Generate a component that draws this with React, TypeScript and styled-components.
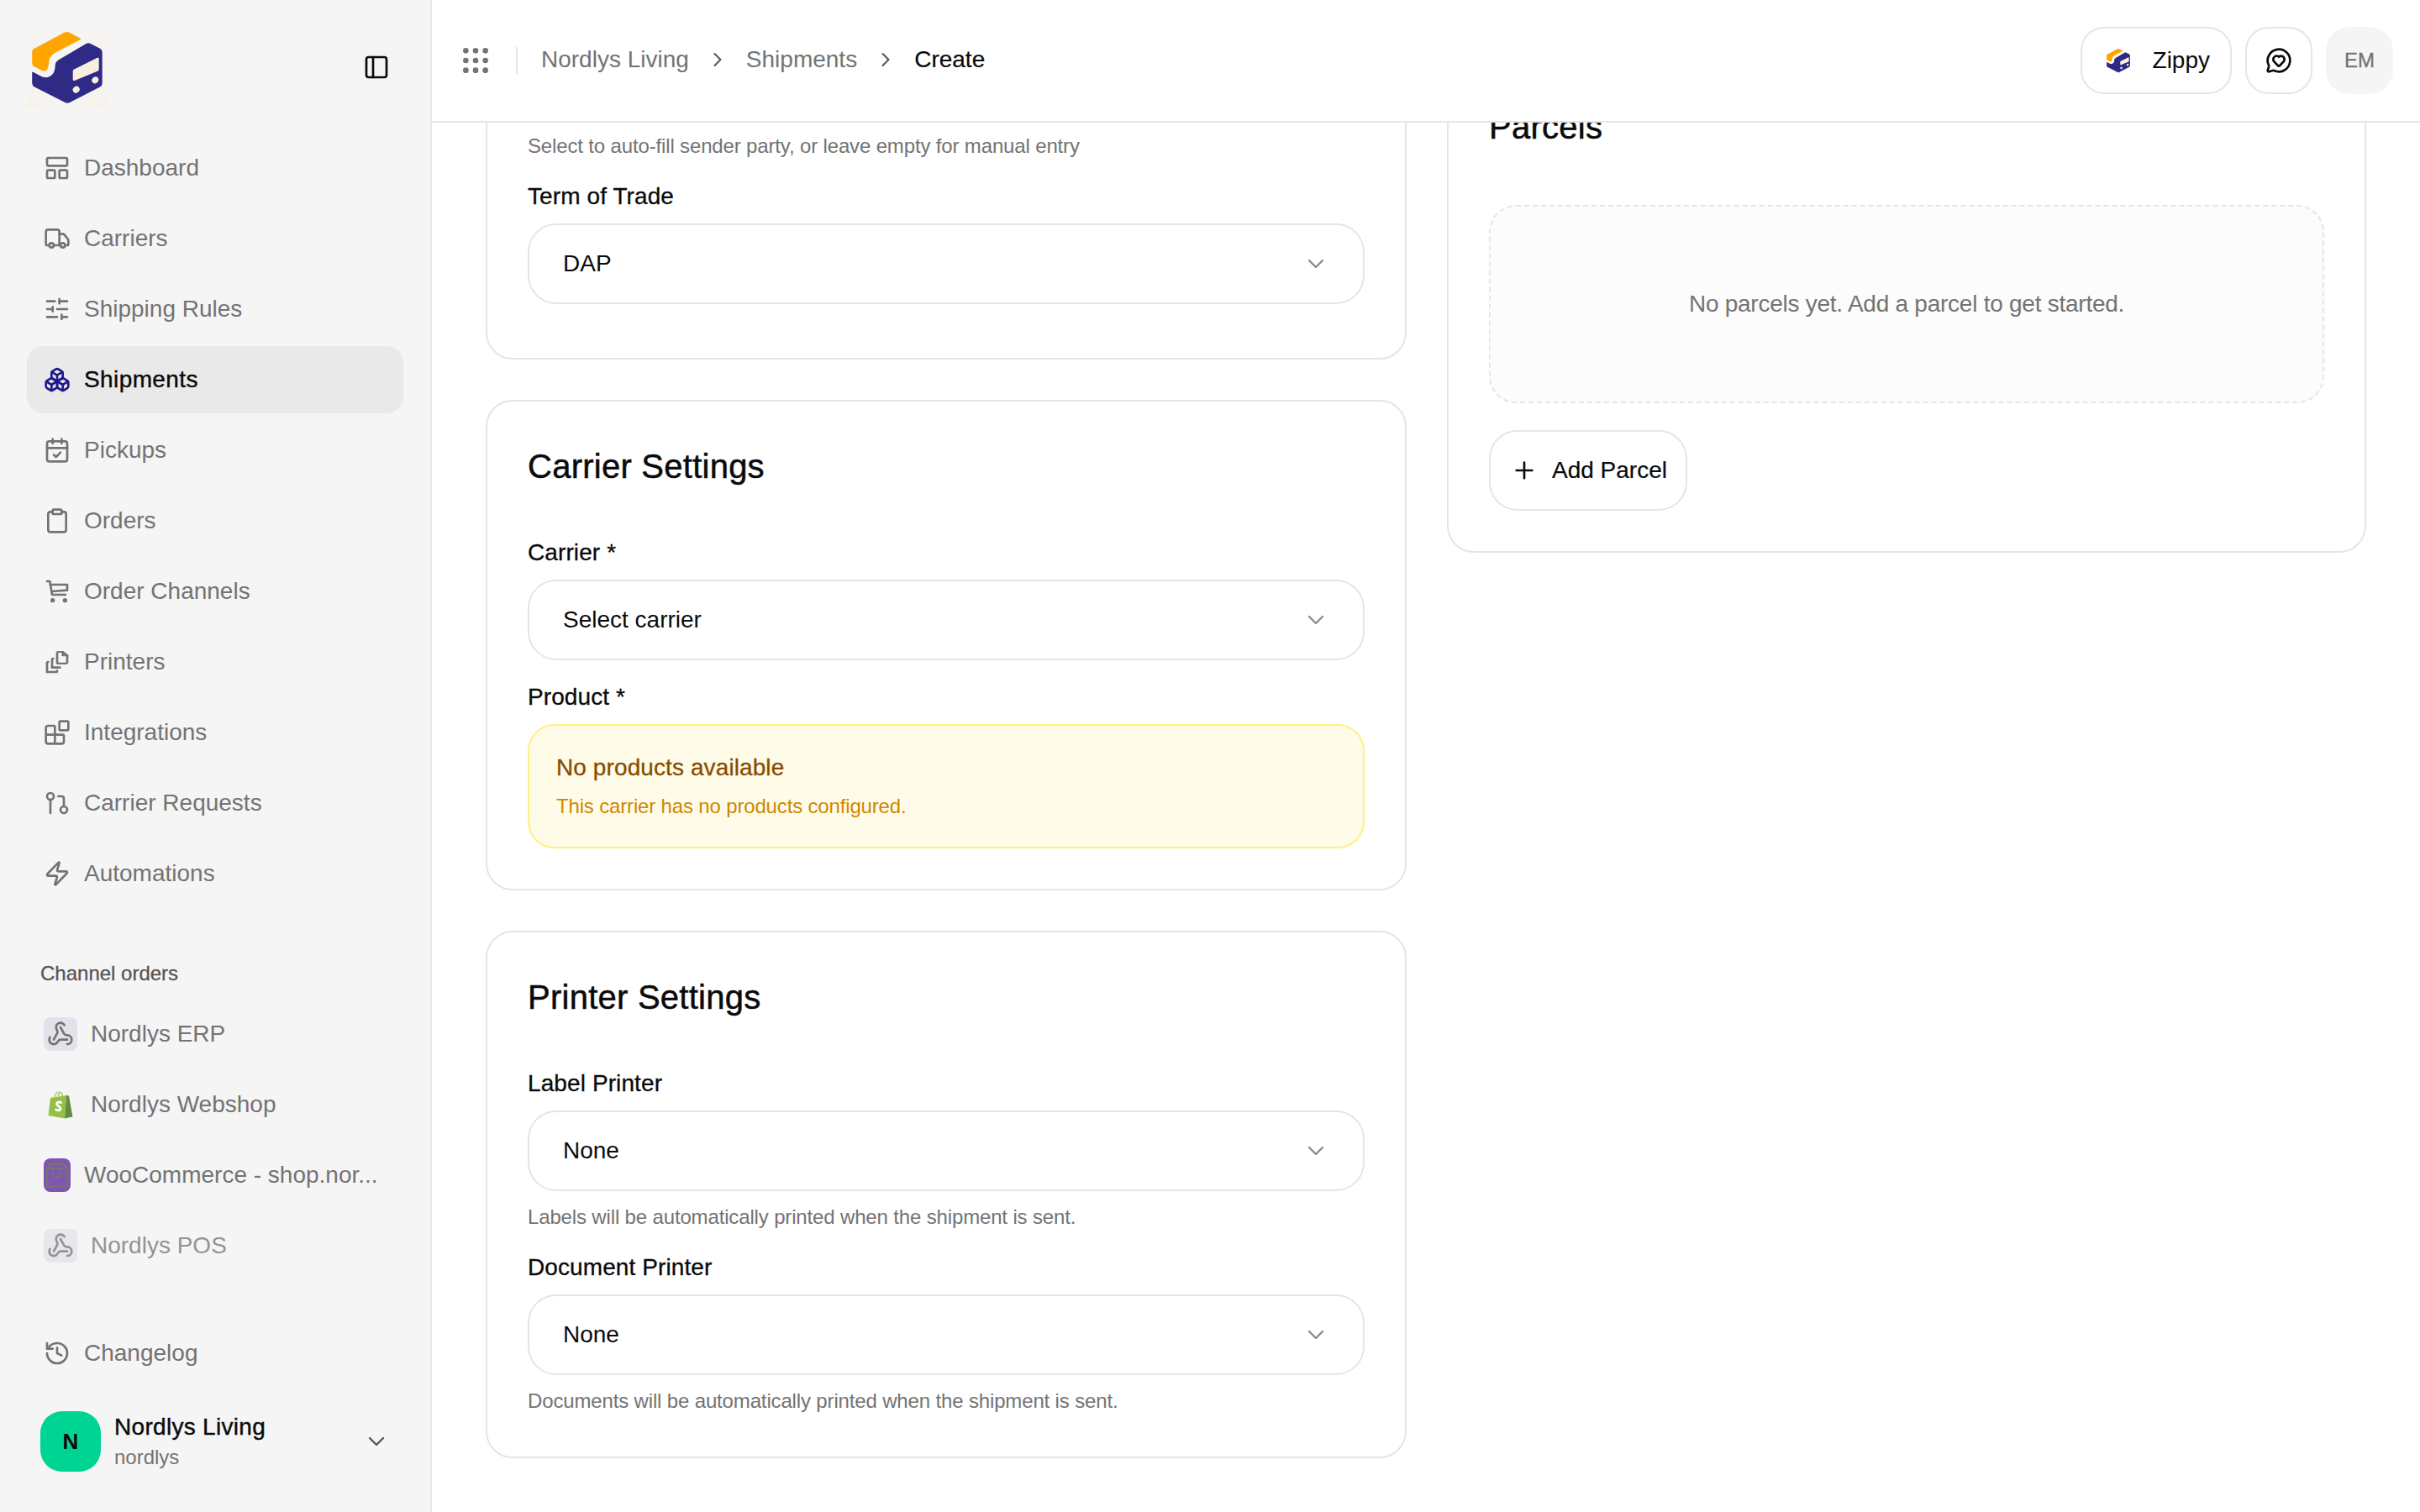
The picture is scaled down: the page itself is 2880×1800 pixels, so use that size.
import React from 'react';
import styled, { createGlobalStyle } from 'styled-components';
import {
  Truck,
  SlidersHorizontal,
  Boxes,
  CalendarCheck,
  Clipboard,
  Blocks,
  GitPullRequest,
  Zap,
  History,
  Webhook,
  ShoppingBag,
  PanelLeft,
  Grip,
  ChevronDown,
  ChevronRight,
  MessageCircleHeart,
  Plus,
} from 'lucide-react';

const GlobalStyle = createGlobalStyle`
  html, body {
    margin: 0;
    padding: 0;
    background: #fff;
  }
  body {
    font-family: "Liberation Sans", Arial, sans-serif;
    color: #0a0a0a;
  }
  * {
    box-sizing: border-box;
  }
`;

const Shell = styled.div`
  display: flex;
  width: 100%;
  height: 100vh;
  overflow: hidden;
`;

const Sidebar = styled.aside`
  width: 514px;
  flex-shrink: 0;
  display: flex;
  flex-direction: column;
  padding: 32px 32px 48px;
  background: #f5f5f5;
  border-right: 2px solid #e8e8e8;
`;

const LogoRow = styled.div`
  display: flex;
  align-items: center;
  justify-content: space-between;
  height: 96px;
  margin-bottom: 32px;
  padding-right: 16px;
`;

const NavList = styled.nav`
  display: flex;
  flex-direction: column;
  gap: 4px;
`;

const NavItem = styled.div<{ $active?: boolean; $faded?: boolean }>`
  display: flex;
  align-items: center;
  gap: 16px;
  height: 80px;
  padding: 0 20px;
  border-radius: 20px;
  font-size: 28px;
  color: ${(p) => (p.$active ? '#0a0a0a' : '#737373')};
  background: ${(p) => (p.$active ? '#e9e9e9' : 'transparent')};
  letter-spacing: ${(p) => (p.$active ? '0.4px' : '0')};
  -webkit-text-stroke: ${(p) => (p.$active ? '0.4px #0a0a0a' : '0')};
  opacity: ${(p) => (p.$faded ? 0.75 : 1)};

  svg {
    flex-shrink: 0;
  }
`;

const NavLabel = styled.span`
  white-space: nowrap;
  margin-bottom: 1px;
`;

const ChannelHeading = styled.div`
  margin: 63px 0 16px;
  padding-left: 16px;
  font-size: 24px;
  line-height: 32px;
  color: #555;
  -webkit-text-stroke: 0.3px #555;
`;

const WebhookTile = styled.span`
  display: flex;
  align-items: center;
  justify-content: center;
  width: 40px;
  height: 40px;
  border-radius: 8px;
  background: #e2e3ea;
`;

const BagSlot = styled.span`
  display: flex;
  align-items: center;
  justify-content: center;
  width: 40px;
  height: 40px;
`;

const WooTile = styled.span`
  display: flex;
  align-items: center;
  justify-content: center;
  width: 32px;
  height: 40px;
  border-radius: 8px;
  background: #7f54b3;
`;

const SidebarFoot = styled.div`
  margin-top: auto;
`;

const OrgRow = styled.div`
  display: flex;
  align-items: center;
  gap: 16px;
  margin-top: 29px;
  padding: 0 16px;
`;

const OrgAvatar = styled.div`
  display: flex;
  align-items: center;
  justify-content: center;
  width: 72px;
  height: 72px;
  flex-shrink: 0;
  border-radius: 26px;
  background: #00d492;
  font-size: 26px;
  font-weight: 700;
  color: #0a0a0a;
`;

const OrgText = styled.div`
  flex: 1;
  min-width: 0;
`;

const OrgName = styled.div`
  font-size: 28px;
  line-height: 38px;
  letter-spacing: 0.3px;
  color: #0a0a0a;
  -webkit-text-stroke: 0.4px #0a0a0a;
`;

const OrgSlug = styled.div`
  font-size: 24px;
  line-height: 34px;
  color: #737373;
`;

const Main = styled.main`
  position: relative;
  flex: 1;
  min-width: 0;
  display: flex;
  flex-direction: column;
`;

const TopBar = styled.header`
  position: relative;
  z-index: 2;
  display: flex;
  align-items: center;
  flex-shrink: 0;
  height: 146px;
  padding: 0 32px;
  background: #fff;
  border-bottom: 2px solid #e5e5e7;
`;

const Divider = styled.span`
  width: 2px;
  height: 32px;
  margin: 0 28px;
  background: #e5e5e7;
`;

const Crumbs = styled.div`
  display: flex;
  align-items: center;
  gap: 20px;
  margin-bottom: 2px;
  font-size: 28px;
  color: #737373;
`;

const Crumb = styled.span<{ $current?: boolean }>`
  color: ${(p) => (p.$current ? '#0a0a0a' : '#737373')};
  -webkit-text-stroke: ${(p) => (p.$current ? '0.2px #0a0a0a' : '0')};
`;

const TopActions = styled.div`
  display: flex;
  align-items: center;
  gap: 16px;
  margin-left: auto;
`;

const ZippyButton = styled.div`
  display: flex;
  align-items: center;
  gap: 25px;
  height: 80px;
  padding: 0 24px 0 27px;
  border: 2px solid #e5e5e7;
  border-radius: 28px;
  background: #fff;
  font-size: 28px;
`;

const IconButton = styled.div`
  display: flex;
  align-items: center;
  justify-content: center;
  width: 80px;
  height: 80px;
  border: 2px solid #e5e5e7;
  border-radius: 28px;
  background: #fff;
`;

const UserBadge = styled.div`
  display: flex;
  align-items: center;
  justify-content: center;
  width: 80px;
  height: 80px;
  border-radius: 28px;
  background: #f5f5f5;
  font-size: 24px;
  color: #737373;
  -webkit-text-stroke: 0.3px #737373;
`;

const Viewport = styled.div`
  flex: 1;
  min-height: 0;
  overflow: hidden;
`;

const ScrolledContent = styled.div`
  display: grid;
  grid-template-columns: 1096px 1094px;
  gap: 48px;
  align-items: start;
  margin-top: -74px;
  padding-left: 64px;
`;

const Column = styled.div`
  display: flex;
  flex-direction: column;
  gap: 48px;
`;

const Card = styled.section`
  padding: 48px;
  background: #fff;
  border: 2px solid #e5e5e7;
  border-radius: 32px;
`;

const ClippedFields = styled.div`
  padding-top: 36px;
  padding-bottom: 16px;
`;

const CardTitle = styled.h2`
  margin: 0 0 54px;
  font-size: 40px;
  font-weight: 400;
  line-height: 58px;
  letter-spacing: 0.25px;
  color: #0a0a0a;
  -webkit-text-stroke: 0.5px #0a0a0a;
`;

const FieldLabel = styled.label`
  display: block;
  margin: 0 0 12px;
  font-size: 28px;
  line-height: 40px;
  letter-spacing: 0.1px;
  color: #0a0a0a;
  -webkit-text-stroke: 0.3px #0a0a0a;
`;

const Field = styled.div`
  & + & {
    margin-top: 24px;
  }
`;

const SelectBox = styled.div`
  display: flex;
  align-items: center;
  justify-content: space-between;
  height: 96px;
  padding: 0 40px;
  background: #fff;
  border: 2px solid #e5e5e7;
  border-radius: 34px;
  font-size: 28px;
  color: #0a0a0a;

  svg {
    color: #8a8a8a;
  }
`;

const Hint = styled.p<{ $below?: boolean }>`
  margin: ${(p) => (p.$below ? '15px 0 2px' : '0 0 24px')};
  font-size: 24px;
  line-height: 32px;
  letter-spacing: -0.15px;
  color: #737373;
`;

const Notice = styled.div`
  height: 148px;
  padding: 30px 32px;
  background: #fefce8;
  border: 2px solid #fff085;
  border-radius: 32px;
`;

const NoticeTitle = styled.div`
  margin-bottom: 8px;
  font-size: 28px;
  line-height: 40px;
  letter-spacing: 0.1px;
  color: #894b00;
  -webkit-text-stroke: 0.3px #894b00;
`;

const NoticeText = styled.div`
  font-size: 24px;
  line-height: 36px;
  letter-spacing: -0.16px;
  color: #d08700;
`;

const EmptyBox = styled.div`
  display: flex;
  align-items: center;
  justify-content: center;
  height: 236px;
  margin-top: 64px;
  background: #fcfcfc;
  border: 2px dashed #e5e5e7;
  border-radius: 32px;
  font-size: 28px;
  letter-spacing: -0.25px;
  color: #737373;
`;

const AddButton = styled.div`
  display: inline-flex;
  align-items: center;
  gap: 17px;
  height: 96px;
  margin-top: 32px;
  padding: 0 22px 0 24px;
  background: #fff;
  border: 2px solid #e5e5e7;
  border-radius: 34px;
  font-size: 28px;
  color: #0a0a0a;
  -webkit-text-stroke: 0.2px #0a0a0a;
`;

const CARGO_LOGO_DRAWING = (
  <>
    <path
      d="M44.5 6.8a6 6 0 0 1 6 0l13 6.6a1 1 0 0 1 0 1.8L36 29.5c-6 3.2-9.3 7-9.7 12-.3 3.7-.7 6.6-2.2 9-1.3 2.2-3.7 2.6-6 1.5L9 47.4a5 5 0 0 1-2.8-4.4V29.5a4 4 0 0 1 2.2-3.6z"
      fill="#ffa500"
    />
    <path
      d="M71 19.7a5 5 0 0 1 4.400 0l11.600 6a5 5 0 0 1 2.700 4.400v37a5 5 0 0 1-2.700 4.400L51 90a6 6 0 0 1-5.500 0L9 71.500a5 5 0 0 1-2.800-4.400V54.500a.8.8 0 0 1 1.200-.7l9 4.800c5 2.700 10.500 2 14-2 2.600-3 3.200-6.500 3.300-11 .1-3 1.800-5.200 4.500-6.600z"
      fill="#2f2a85"
    />
    <path d="M54.700 52.500a2 2 0 0 1 1.100-1.800l28-13.900a1.300 1.300 0 0 1 1.900 1.200v12.600a2 2 0 0 1-1.100 1.800L56.800 63.900a1.400 1.400 0 0 1-2.100-1.300z" fill="#f8efe0" />
    <ellipse cx="58.700" cy="74.700" rx="4.200" ry="3.700" transform="rotate(-40 58.700 74.700)" fill="#f8efe0" />
    <ellipse cx="81.300" cy="63.300" rx="4.200" ry="3.700" transform="rotate(-40 81.300 63.300)" fill="#f8efe0" />
  </>
);

const BrandLogo = ({ size }: { size: number }) => (
  <svg width={size} height={size} viewBox="0 0 96 96" aria-hidden="true">
    {CARGO_LOGO_DRAWING}
  </svg>
);

const LogoTile = styled.div`
  width: 96px;
  height: 96px;
  background: radial-gradient(circle at 50% 45%, #f5f5f5 55%, #f9f1e6 100%);
`;

const DashboardIcon = () => (
  <svg width="32" height="32" viewBox="0 0 24 24" fill="none" stroke="currentColor" strokeWidth="2" strokeLinejoin="round">
    <rect x="3" y="3" width="18" height="7" rx="1" />
    <rect x="3" y="14" width="7" height="7" rx="1" />
    <rect x="14" y="14" width="7" height="7" rx="1" />
  </svg>
);

const CartIcon = () => (
  <svg width="32" height="32" viewBox="0 0 24 24" fill="none" stroke="currentColor" strokeWidth="2" strokeLinecap="round" strokeLinejoin="round">
    <path d="M3 3h2.500L7.500 15h12" />
    <path d="M6 6h15v5l-13.200 1" />
    <circle cx="8" cy="20" r="1" />
    <circle cx="19" cy="20" r="1" />
  </svg>
);

const PrintersIcon = () => (
  <svg width="32" height="32" viewBox="0 0 24 24" fill="none" stroke="currentColor" strokeWidth="2" strokeLinecap="round" strokeLinejoin="round">
    <path d="M3 21v-8a1 1 0 0 1 1-1" />
    <path d="M3 21h8a1 1 0 0 0 1-1" />
    <path d="M7.500 17v-7a1 1 0 0 1 1-1" />
    <path d="M7.500 17h7" />
    <path d="M12 16V4a1 1 0 0 1 1-1h4l4 4v8a1 1 0 0 1-1 1h-7" transform="matrix(1 0 0 .8 0 .6)" />
    <path d="M17 3v4h4" transform="matrix(1 0 0 .8 0 .6)" />
  </svg>
);

const ShopifyBag = () => (
  <svg width="30" height="33" viewBox="0 0 30 33" aria-hidden="true">
    <path d="M22 5 3 8 .5 29 20 32.500z" fill="#95bf47" />
    <path d="M22 5l3 .5 4.500 25L20 32.500z" fill="#5e8e3e" />
    <path d="M8 7c.5-3.500 3-6 5.500-6 2.500 0 4 2.500 4 5.500M12 6c.5-2 2-3.500 3-3.500" fill="none" stroke="#95bf47" strokeWidth="1.200" />
    <path d="M15.500 13.500c-2-1-5-.5-5 1.800 0 2.700 4.500 2.700 4.500 5.400 0 2.400-3 2.700-5.500 1.300" fill="none" stroke="#fff" strokeWidth="2.800" strokeLinecap="round" />
  </svg>
);

type NavEntry = { label: string; icon: React.ReactNode; active?: boolean };

const NAV_ENTRIES: NavEntry[] = [
  { label: 'Dashboard', icon: <DashboardIcon /> },
  { label: 'Carriers', icon: <Truck size={32} /> },
  { label: 'Shipping Rules', icon: <SlidersHorizontal size={32} /> },
  { label: 'Shipments', icon: <Boxes size={32} color="#1e1a8a" />, active: true },
  { label: 'Pickups', icon: <CalendarCheck size={32} /> },
  { label: 'Orders', icon: <Clipboard size={32} /> },
  { label: 'Order Channels', icon: <CartIcon /> },
  { label: 'Printers', icon: <PrintersIcon /> },
  { label: 'Integrations', icon: <Blocks size={32} /> },
  { label: 'Carrier Requests', icon: <GitPullRequest size={32} /> },
  { label: 'Automations', icon: <Zap size={32} /> },
];

const SelectField = ({ label, value, hint }: { label: string; value: string; hint?: string }) => (
  <Field>
    <FieldLabel>{label}</FieldLabel>
    <SelectBox>
      {value}
      <ChevronDown size={32} strokeWidth={1.8} />
    </SelectBox>
    {hint && <Hint $below>{hint}</Hint>}
  </Field>
);

const App = () => {
  return (
    <>
      <GlobalStyle />
      <Shell>
        <Sidebar>
          <LogoRow>
            <LogoTile>
              <BrandLogo size={96} />
            </LogoTile>
            <PanelLeft size={32} color="#0a0a0a" />
          </LogoRow>

          <NavList>
            {NAV_ENTRIES.map((entry) => (
              <NavItem key={entry.label} $active={entry.active}>
                {entry.icon}
                <NavLabel>{entry.label}</NavLabel>
              </NavItem>
            ))}
          </NavList>

          <ChannelHeading>Channel orders</ChannelHeading>
          <NavList>
            <NavItem>
              <WebhookTile>
                <Webhook size={32} />
              </WebhookTile>
              <NavLabel>Nordlys ERP</NavLabel>
            </NavItem>
            <NavItem>
              <BagSlot>
                <ShopifyBag />
              </BagSlot>
              <NavLabel>Nordlys Webshop</NavLabel>
            </NavItem>
            <NavItem>
              <WooTile>
                <ShoppingBag size={32} />
              </WooTile>
              <NavLabel>WooCommerce - shop.nor...</NavLabel>
            </NavItem>
            <NavItem $faded>
              <WebhookTile>
                <Webhook size={32} />
              </WebhookTile>
              <NavLabel>Nordlys POS</NavLabel>
            </NavItem>
          </NavList>

          <SidebarFoot>
            <NavItem>
              <History size={32} />
              <NavLabel>Changelog</NavLabel>
            </NavItem>
            <OrgRow>
              <OrgAvatar>N</OrgAvatar>
              <OrgText>
                <OrgName>Nordlys Living</OrgName>
                <OrgSlug>nordlys</OrgSlug>
              </OrgText>
              <ChevronDown size={32} color="#555" strokeWidth={1.8} />
            </OrgRow>
          </SidebarFoot>
        </Sidebar>

        <Main>
          <TopBar>
            <Grip size={40} color="#737373" />
            <Divider />
            <Crumbs>
              <Crumb>Nordlys Living</Crumb>
              <ChevronRight size={28} color="#555" strokeWidth={1.8} />
              <Crumb>Shipments</Crumb>
              <ChevronRight size={28} color="#555" strokeWidth={1.8} />
              <Crumb $current>Create</Crumb>
            </Crumbs>
            <TopActions>
              <ZippyButton>
                <BrandLogo size={32} />
                Zippy
              </ZippyButton>
              <IconButton>
                <MessageCircleHeart size={32} color="#0a0a0a" />
              </IconButton>
              <UserBadge>EM</UserBadge>
            </TopActions>
          </TopBar>

          <Viewport>
            <ScrolledContent>
              <Column>
                <Card>
                  <ClippedFields>
                    <Hint>Select to auto-fill sender party, or leave empty for manual entry</Hint>
                    <SelectField label="Term of Trade" value="DAP" />
                  </ClippedFields>
                </Card>

                <Card>
                  <CardTitle>Carrier Settings</CardTitle>
                  <SelectField label="Carrier *" value="Select carrier" />
                  <Field>
                    <FieldLabel>Product *</FieldLabel>
                    <Notice>
                      <NoticeTitle>No products available</NoticeTitle>
                      <NoticeText>This carrier has no products configured.</NoticeText>
                    </Notice>
                  </Field>
                </Card>

                <Card>
                  <CardTitle>Printer Settings</CardTitle>
                  <SelectField
                    label="Label Printer"
                    value="None"
                    hint="Labels will be automatically printed when the shipment is sent."
                  />
                  <SelectField
                    label="Document Printer"
                    value="None"
                    hint="Documents will be automatically printed when the shipment is sent."
                  />
                </Card>
              </Column>

              <Column>
                <Card>
                  <CardTitle>Parcels</CardTitle>
                  <EmptyBox>No parcels yet. Add a parcel to get started.</EmptyBox>
                  <AddButton>
                    <Plus size={32} />
                    Add Parcel
                  </AddButton>
                </Card>
              </Column>
            </ScrolledContent>
          </Viewport>
        </Main>
      </Shell>
    </>
  );
};

export default App;
